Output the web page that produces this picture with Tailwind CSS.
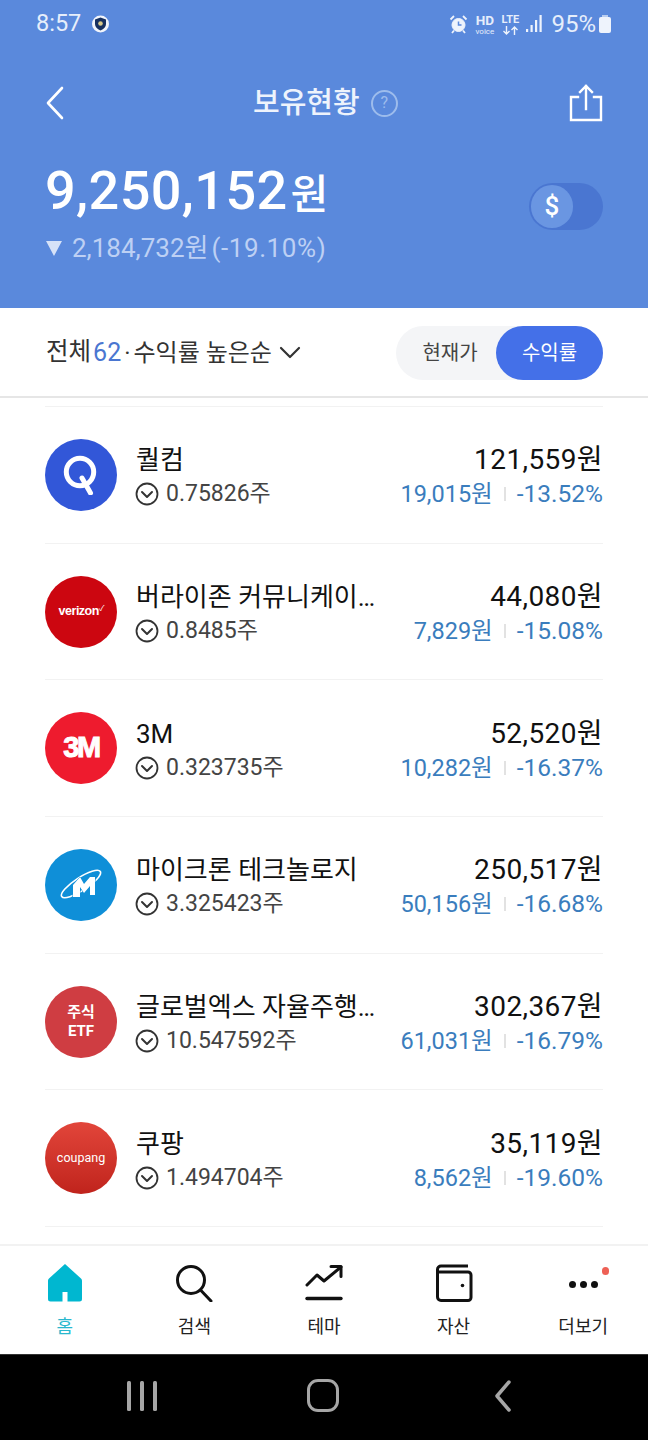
<!DOCTYPE html>
<html lang="ko">
  <head>
    <meta charset="UTF-8" />
    <title>보유현황</title>
    <script src="https://cdn.jsdelivr.net/npm/@tailwindcss/browser@4"></script>
  </head>
  <body class="bg-white font-['Roboto','Noto_Sans_CJK_KR',sans-serif]">
    <div class="w-[648px] h-[1440px] flex flex-col overflow-hidden">
      <!-- Header -->
      <header class="h-[308px] shrink-0 bg-[#5a89dc] text-white px-[45px] flex flex-col">
        <!-- Status bar -->
        <div class="h-[48px] -mx-[8px] flex items-center justify-between text-[#e6eefb]">
          <div class="flex items-center gap-[10px]">
            <span class="text-[23.5px] leading-none -ml-[1px]">8:57</span>
            <svg width="19" height="20" viewBox="0 0 18 20"><circle cx="9" cy="10" r="8.5" fill="#f2f5fb"/><path d="M9 3.500l5.500 2v4.500c0 3-2 5-5.500 6.500-3.500-1.500-5.500-3.500-5.500-6.500V5.500z" fill="#17305f"/><circle cx="9" cy="9.500" r="2.300" fill="#d8c98a"/></svg>
          </div>
          <div class="flex items-center">
            <svg width="19" height="20" viewBox="0 0 18 20" class="mr-[6px]" fill="none" stroke="#eef3fc"><circle cx="9" cy="11" r="6.500" fill="#eef3fc"/><path d="M9 7.500V11h3" stroke="#5a89dc" stroke-width="1.500"/><path d="M1 5.500l3.500-3.500M17 5.500L13.500 2M4.500 16.500L2.500 19M13.500 16.500l2 2.500" stroke-width="1.800"/></svg>
            <div class="w-[21px] mr-[5px] flex flex-col items-center font-bold leading-none"><span class="text-[13.500px] leading-[14px]">HD</span><span class="text-[8px] leading-[9px] font-normal">voice</span></div>
            <div class="w-[20px] mr-[6px] flex flex-col items-center leading-none">
              <span class="text-[11px] leading-[11px] font-bold">LTE</span>
              <svg width="17" height="9" viewBox="0 0 17 9" fill="none" stroke="#eef3fc" stroke-width="1.400" class="mt-[1px]"><path d="M4.500 0v8M1.500 5l3 3 3-3M12.500 9V1M9.500 4l3-3 3 3"/></svg>
            </div>
            <svg width="17" height="20" viewBox="0 0 17 20" class="mr-[8px]" fill="#eef3fc"><rect x="0" y="15" width="2.200" height="3"/><rect x="4.500" y="11" width="2.200" height="7"/><rect x="9" y="6" width="2.200" height="12"/><rect x="13.500" y="1" width="2.200" height="17"/></svg>
            <span class="text-[24px] leading-none">95%</span>
            <div class="ml-[3px] w-[12px] h-[16px] mt-[2px] bg-[#eef3fc] rounded-[2px] relative"><div class="absolute -top-[2px] left-[3px] w-[6px] h-[2px] bg-[#b9cdf0]"></div></div>
          </div>
        </div>
        <!-- Title row -->
        <div class="relative h-[60px] mt-[25px] flex items-center justify-between">
          <svg width="20" height="34" viewBox="0 0 20 34" fill="none" stroke="#fff" stroke-width="2.600" stroke-linecap="round" stroke-linejoin="round"><path d="M17 2L3 17l14 15"/></svg>
          <div class="absolute left-[208px] top-[10px] flex items-center gap-[11px]">
            <span class="text-[29px] leading-[40px] font-medium text-[#eef3fc]">보유현황</span>
            <div class="w-[27px] h-[27px] rounded-full border-2 border-[#9dbcec] text-[#9dbcec] text-[16px] flex items-center justify-center">?</div>
          </div>
          <svg width="34" height="38" viewBox="0 0 34 38" fill="none" stroke="#fff" stroke-width="2.400" stroke-linecap="square"><path d="M9 13H2v23h30V13h-7"/><path d="M17 25V2M11 8l6-6 6 6"/></svg>
        </div>
        <!-- Balance -->
        <div class="mt-[29px] flex justify-between">
          <div>
            <div class="flex items-baseline leading-none font-medium">
              <span class="text-[54px] tracking-[0.4px] leading-[58px]">9,250,152</span><span class="text-[41px] ml-[3px] font-medium">원</span>
            </div>
            <div class="mt-[10px] flex items-center text-[#bdd0f4] text-[26px] leading-[36px]">
              <svg width="18" height="16" viewBox="0 0 18 16" class="mr-[9px]"><path d="M1 1h16l-8 15z" fill="#d6e2f8"/></svg>
              <span>2,184,732원</span><span class="ml-[3px] tracking-[0.6px]">(-19.10%)</span>
            </div>
          </div>
          <div class="w-[74px] h-[47px] rounded-full bg-[#4a76d1] p-[2px] mt-[21px]">
            <div class="w-[42px] h-[43px] rounded-full bg-[#6a96e2] flex items-center justify-center text-[26px] font-medium text-white">$</div>
          </div>
        </div>
      </header>

      <!-- Filter bar -->
      <div class="h-[90px] shrink-0 px-[45px] border-b-2 border-[#e6e6e6] flex items-center justify-between">
        <div class="flex items-center text-[24px] text-[#333] leading-none mt-[1px]">
          <span class="text-[24.500px] ml-[1px]">전체</span><span class="ml-[2px] text-[#4a76d1] text-[25px]">62</span><span class="mx-[3px]">·</span><span>수익률 높은순</span>
          <svg width="22" height="14" viewBox="0 0 22 14" class="ml-[7px]" fill="none" stroke="#333" stroke-width="2.200" stroke-linecap="round" stroke-linejoin="round"><path d="M2 2l9 9 9-9"/></svg>
        </div>
        <div class="w-[207px] h-[54px] mt-[1px] rounded-full bg-[#f4f5f7] flex text-[20px]">
          <div class="w-[100px] pl-[8px] flex items-center justify-center text-[#444]">현재가</div>
          <div class="w-[107px] rounded-full bg-[#4470e8] text-white flex items-center justify-center">수익률</div>
        </div>
      </div>

      <!-- Holdings -->
      <div class="flex-1 pt-[8px] overflow-hidden">
        <div class="mx-[45px] border-t border-[#f2f2f2]">

          <div class="h-[136.700px] border-b border-[#f2f2f2] flex items-center">
            <div class="w-[72px] h-[72px] rounded-full bg-[#3257d8] flex items-center justify-center">
              <svg width="36" height="40" viewBox="0 0 36 40" fill="none" stroke="#fff" stroke-width="5"><circle cx="17" cy="17" r="13.700"/><path d="M19 23l8.500 15" stroke-linecap="round"/></svg>
            </div>
            <div class="ml-[19px] flex-1 min-w-0">
              <div class="mt-[3px] text-[26px] leading-[36px] text-[#111] whitespace-nowrap">퀄컴</div>
              <div class="flex items-center text-[23px] leading-[32px] -ml-[1px] text-[#444]">
                <svg width="24" height="24" viewBox="0 0 24 24" class="mr-[7px]" fill="none" stroke="#333" stroke-width="1.800"><circle cx="12" cy="12" r="10.500"/><path d="M7 10l5 5 5-5" stroke-linecap="round" stroke-linejoin="round" stroke-width="2"/></svg>
                0.75826주
              </div>
            </div>
            <div class="text-right shrink-0">
              <div class="mt-[3px] text-[28px] tracking-[0.400px] leading-[36px] text-[#111]">121,559원</div>
              <div class="flex items-center justify-end text-[23.500px] leading-[32px] text-[#3a7dbd]">19,015원<span class="mx-[11px] w-[2px] h-[14px] bg-[#e2e2e2]"></span><span class="text-[24.500px]">-13.52%</span></div>
            </div>
          </div>

          <div class="h-[136.700px] border-b border-[#f2f2f2] flex items-center">
            <div class="w-[72px] h-[72px] rounded-full bg-[#cc0610] flex items-center justify-center text-white text-[12.500px] font-bold font-['Liberation_Sans'] tracking-[-0.500px]">verizon<span class="text-[8px] -mt-[5px] font-normal">✓</span></div>
            <div class="ml-[19px] flex-1 min-w-0">
              <div class="mt-[3px] text-[26px] leading-[36px] text-[#111] whitespace-nowrap">버라이존 커뮤니케이…</div>
              <div class="flex items-center text-[23px] leading-[32px] -ml-[1px] text-[#444]">
                <svg width="24" height="24" viewBox="0 0 24 24" class="mr-[7px]" fill="none" stroke="#333" stroke-width="1.800"><circle cx="12" cy="12" r="10.500"/><path d="M7 10l5 5 5-5" stroke-linecap="round" stroke-linejoin="round" stroke-width="2"/></svg>
                0.8485주
              </div>
            </div>
            <div class="text-right shrink-0">
              <div class="mt-[3px] text-[28px] tracking-[0.400px] leading-[36px] text-[#111]">44,080원</div>
              <div class="flex items-center justify-end text-[23.500px] leading-[32px] text-[#3a7dbd]">7,829원<span class="mx-[11px] w-[2px] h-[14px] bg-[#e2e2e2]"></span><span class="text-[24.500px]">-15.08%</span></div>
            </div>
          </div>

          <div class="h-[136.700px] border-b border-[#f2f2f2] flex items-center">
            <div class="w-[72px] h-[72px] rounded-full bg-[#ee1b2e] flex items-center justify-center text-white text-[29px] font-bold font-['Liberation_Sans'] tracking-[-2.500px] [-webkit-text-stroke:1px_white]">3M</div>
            <div class="ml-[19px] flex-1 min-w-0">
              <div class="mt-[3px] text-[26px] leading-[36px] text-[#111] whitespace-nowrap">3M</div>
              <div class="flex items-center text-[23px] leading-[32px] -ml-[1px] text-[#444]">
                <svg width="24" height="24" viewBox="0 0 24 24" class="mr-[7px]" fill="none" stroke="#333" stroke-width="1.800"><circle cx="12" cy="12" r="10.500"/><path d="M7 10l5 5 5-5" stroke-linecap="round" stroke-linejoin="round" stroke-width="2"/></svg>
                0.323735주
              </div>
            </div>
            <div class="text-right shrink-0">
              <div class="mt-[3px] text-[28px] tracking-[0.400px] leading-[36px] text-[#111]">52,520원</div>
              <div class="flex items-center justify-end text-[23.500px] leading-[32px] text-[#3a7dbd]">10,282원<span class="mx-[11px] w-[2px] h-[14px] bg-[#e2e2e2]"></span><span class="text-[24.500px]">-16.37%</span></div>
            </div>
          </div>

          <div class="h-[136.700px] border-b border-[#f2f2f2] flex items-center">
            <div class="w-[72px] h-[72px] rounded-full bg-[#0f8fd8] flex items-center justify-center">
              <svg width="42" height="32" viewBox="0 0 42 32" fill="none"><ellipse cx="21" cy="15" rx="23" ry="6.500" transform="rotate(-33 21 15)" stroke="#fff" stroke-width="1.600"/><path d="M13 28V16l7-8 4 7 6-7h5v18h-5V17l-6 7-4-6v10z" fill="#fff" stroke="#0f8fd8" stroke-width="1" paint-order="stroke"/></svg>
            </div>
            <div class="ml-[19px] flex-1 min-w-0">
              <div class="mt-[3px] text-[26px] leading-[36px] text-[#111] whitespace-nowrap">마이크론 테크놀로지</div>
              <div class="flex items-center text-[23px] leading-[32px] -ml-[1px] text-[#444]">
                <svg width="24" height="24" viewBox="0 0 24 24" class="mr-[7px]" fill="none" stroke="#333" stroke-width="1.800"><circle cx="12" cy="12" r="10.500"/><path d="M7 10l5 5 5-5" stroke-linecap="round" stroke-linejoin="round" stroke-width="2"/></svg>
                3.325423주
              </div>
            </div>
            <div class="text-right shrink-0">
              <div class="mt-[3px] text-[28px] tracking-[0.400px] leading-[36px] text-[#111]">250,517원</div>
              <div class="flex items-center justify-end text-[23.500px] leading-[32px] text-[#3a7dbd]">50,156원<span class="mx-[11px] w-[2px] h-[14px] bg-[#e2e2e2]"></span><span class="text-[24.500px]">-16.68%</span></div>
            </div>
          </div>

          <div class="h-[136.700px] border-b border-[#f2f2f2] flex items-center">
            <div class="w-[72px] h-[72px] rounded-full bg-[#cf3d42] flex flex-col items-center justify-center text-white text-[15px] leading-[19px] font-bold"><span>주식</span><span>ETF</span></div>
            <div class="ml-[19px] flex-1 min-w-0">
              <div class="mt-[3px] text-[26px] leading-[36px] text-[#111] whitespace-nowrap">글로벌엑스 자율주행…</div>
              <div class="flex items-center text-[23px] leading-[32px] -ml-[1px] text-[#444]">
                <svg width="24" height="24" viewBox="0 0 24 24" class="mr-[7px]" fill="none" stroke="#333" stroke-width="1.800"><circle cx="12" cy="12" r="10.500"/><path d="M7 10l5 5 5-5" stroke-linecap="round" stroke-linejoin="round" stroke-width="2"/></svg>
                10.547592주
              </div>
            </div>
            <div class="text-right shrink-0">
              <div class="mt-[3px] text-[28px] tracking-[0.400px] leading-[36px] text-[#111]">302,367원</div>
              <div class="flex items-center justify-end text-[23.500px] leading-[32px] text-[#3a7dbd]">61,031원<span class="mx-[11px] w-[2px] h-[14px] bg-[#e2e2e2]"></span><span class="text-[24.500px]">-16.79%</span></div>
            </div>
          </div>

          <div class="h-[136.700px] border-b border-[#f2f2f2] flex items-center">
            <div class="w-[72px] h-[72px] rounded-full bg-gradient-to-b from-[#e2453a] to-[#c0231c] flex items-center justify-center text-white text-[12.500px]">coupang</div>
            <div class="ml-[19px] flex-1 min-w-0">
              <div class="mt-[3px] text-[26px] leading-[36px] text-[#111] whitespace-nowrap">쿠팡</div>
              <div class="flex items-center text-[23px] leading-[32px] -ml-[1px] text-[#444]">
                <svg width="24" height="24" viewBox="0 0 24 24" class="mr-[7px]" fill="none" stroke="#333" stroke-width="1.800"><circle cx="12" cy="12" r="10.500"/><path d="M7 10l5 5 5-5" stroke-linecap="round" stroke-linejoin="round" stroke-width="2"/></svg>
                1.494704주
              </div>
            </div>
            <div class="text-right shrink-0">
              <div class="mt-[3px] text-[28px] tracking-[0.400px] leading-[36px] text-[#111]">35,119원</div>
              <div class="flex items-center justify-end text-[23.500px] leading-[32px] text-[#3a7dbd]">8,562원<span class="mx-[11px] w-[2px] h-[14px] bg-[#e2e2e2]"></span><span class="text-[24.500px]">-19.60%</span></div>
            </div>
          </div>
        </div>
      </div>

      <!-- Tab bar -->
      <nav class="h-[110px] shrink-0 border-t-2 border-[#f2f2f2] grid grid-cols-5 text-[#222] text-[18px]">
        <div class="flex flex-col items-center pt-[18px]">
          <svg width="36" height="38" viewBox="0 0 36 38"><path d="M18 0L2 14.500a3 3 0 0 0-1 2.300V35a2.500 2.500 0 0 0 2.500 2.500H15.500V28h5v9.500H32.500A2.500 2.500 0 0 0 35 35V16.800a3 3 0 0 0-1-2.300z" fill="#00b7d0"/></svg>
          <span class="mt-[12px] text-[#2ab8ce] leading-[26px]">홈</span>
        </div>
        <div class="flex flex-col items-center pt-[18px]">
          <svg width="38" height="38" viewBox="0 0 38 38" fill="none" stroke="#111" stroke-width="3" stroke-linecap="round"><circle cx="16" cy="16" r="13.500"/><path d="M25.500 26L36 37"/></svg>
          <span class="mt-[12px] leading-[26px]">검색</span>
        </div>
        <div class="flex flex-col items-center pt-[18px]">
          <svg width="38" height="38" viewBox="0 0 38 38" fill="none" stroke="#111" stroke-width="3" stroke-linecap="round" stroke-linejoin="round"><path d="M2 21l10-10 7 6L36 3"/><path d="M26 2.500h10v10"/><path d="M2 34.500h34" stroke-width="3.400"/></svg>
          <span class="mt-[12px] leading-[26px]">테마</span>
        </div>
        <div class="flex flex-col items-center pt-[18px]">
          <svg width="38" height="38" viewBox="0 0 38 38" fill="none" stroke="#111" stroke-width="3"><path d="M33 2H6a3.500 3.500 0 0 0-3.500 3.500V33A3.500 3.500 0 0 0 6 36.500h27a3 3 0 0 0 3-3V11a3 3 0 0 0-3-3H3"/><circle cx="27.500" cy="21.500" r="1.800" fill="#111" stroke="none"/></svg>
          <span class="mt-[12px] leading-[26px]">자산</span>
        </div>
        <div class="relative flex flex-col items-center pt-[18px]">
          <div class="h-[38px] flex items-center gap-[4px] mt-[1px]"><i class="w-[7px] h-[7px] rounded-full bg-[#111]"></i><i class="w-[7px] h-[7px] rounded-full bg-[#111]"></i><i class="w-[7px] h-[7px] rounded-full bg-[#111]"></i></div>
          <span class="absolute left-[84px] top-[21px] w-[7px] h-[8px] rounded-full bg-[#ee6055]"></span>
          <span class="mt-[11px] leading-[26px]">더보기</span>
        </div>
      </nav>

      <!-- System nav -->
      <div class="h-[86px] shrink-0 bg-black border-t border-[#333] pb-[4px] flex items-center justify-between pl-[127px] pr-[136px]">
        <svg width="30" height="32" viewBox="0 0 30 32" fill="#a6a6a6"><rect width="4" height="30" y="1" rx="1.500"/><rect x="13" width="4" height="30" y="1" rx="1.500"/><rect x="26" width="4" height="30" y="1" rx="1.500"/></svg>
        <div class="w-[32px] h-[33px] mr-[6px] border-[3.500px] border-[#a6a6a6] rounded-[11px]"></div>
        <svg width="18" height="32" viewBox="0 0 18 32" fill="none" stroke="#a6a6a6" stroke-width="3.500" stroke-linecap="round" stroke-linejoin="round"><path d="M15 2L3 16l12 14"/></svg>
      </div>
    </div>
  </body>
</html>
